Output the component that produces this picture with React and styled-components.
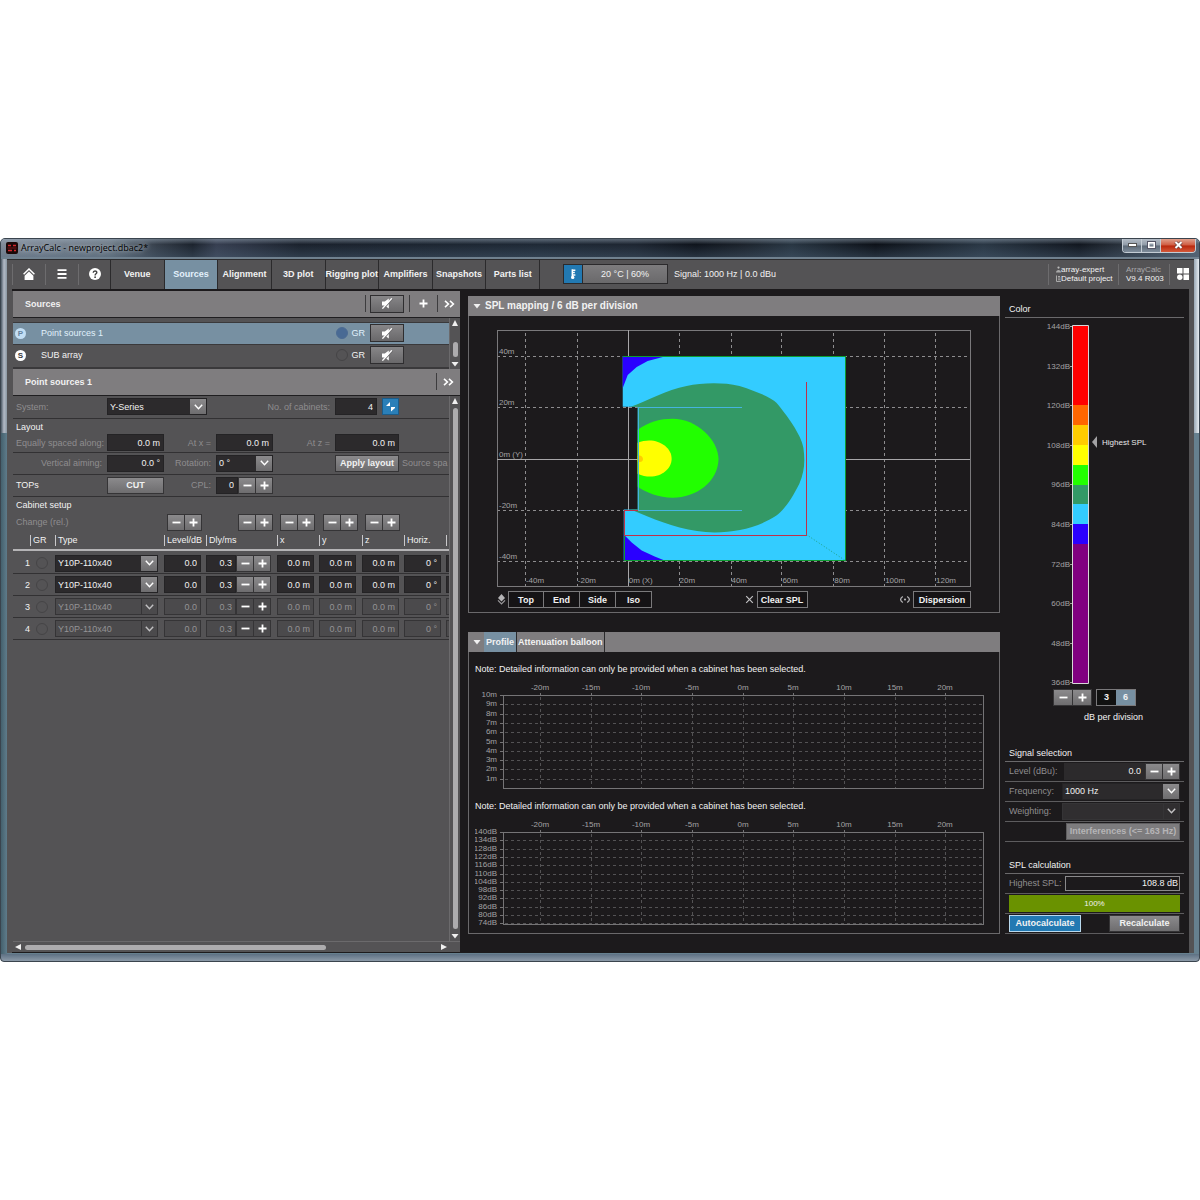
import { useState } from "react"
import styled, { createGlobalStyle, css } from "styled-components";

const GlobalStyle = createGlobalStyle`
    :root {
        --ui-font: "Liberation Sans", Arial, sans-serif;
        --title-font: "Open Sans", "Noto Sans", sans-serif;
        --panel: #545355;
        --header: #7f7d7f;
        --dark: #1c1a1c;
        --field: #2c2a2c;
        --line: #323133;
        --muted: #8f8d8f;
        --light: #f2f2f2;
        --accent: #7790a2;
        --blue: #2279b2;
    }
    * {
        box-sizing: border-box;
    }
    body {
        margin: 0;
        background: #fff;
        font-family: var(--ui-font);
        font-size: 9px;
        line-height: 12px;
        color: var(--light);
    }
    button, input, select {
        margin: 0;
        font: inherit;
        color: inherit;
    }
`
const Page = styled.div`
    display: flex;
    align-items: center;
    min-height: 100vh;
`
const Window = styled.div`
    flex: 1;
    min-width: 0;
    padding: 0 5px 8px 6px;
    border-radius: 5px 5px 4px 4px;
    border: 1px solid #3a444e;
    background:
        linear-gradient(#5d7083, #8c9aa8) bottom / 100% 7px no-repeat,
        linear-gradient(90deg, #4d5a66, #b3bac6 50%, #8b98a3) left top / 6px 194px no-repeat,
        linear-gradient(90deg, #8a9aa8, #e8edf2) right top / 6px 194px no-repeat,
        linear-gradient(90deg, #44606d, #5f7c8b) left / 6px 100% no-repeat,
        #66808f;
`
const TitleBar = styled.header`
    display: flex;
    align-items: flex-start;
    height: 20px;
    margin: 0 -5px 0 -6px;
    padding-left: 5px;
    border-radius: 4px 4px 0 0;
    border-bottom: 2px solid #70818f;
    background:
        linear-gradient(rgba(150, 165, 180, 0.5), rgba(20, 28, 38, 0.1) 30%, rgba(70, 90, 110, 0.45)),
        linear-gradient(90deg, #8e98a6, #76838f 9%, #3a434f 13%, #1d242e 16%, #3b4356 18%, #1b222d 25%, #202b38 45%, #1f2733 53%, #0e131b 58%, #1d242d 62%, #2b3946 66%, #0c1017 73%, #2d3b49 82%, #11161e 90%, #5c6b7a);
`
const Title = styled.h1`
    flex: 1;
    margin: 0;
    padding: 3px 0 0 3px;
    font-family: var(--title-font);
    font-size: 9px;
    font-weight: 400;
    line-height: 12px;
    letter-spacing: normal;
    color: #000;
    text-shadow: 0 0 4px #d5dbe2;
`
const AppLogo = styled.svg`
    margin-top: 3px;
`
const WindowButtons = styled.div`
    display: flex;
    margin-right: 3px;
    border: 1px solid #c3ccd4;
    border-top: none;
    border-radius: 0 0 4px 4px;
    overflow: hidden;
`
const WindowButton = styled.button`
    display: flex;
    align-items: center;
    justify-content: center;
    width: ${p => (p.$close ? 34 : 19)}px;
    height: 13px;
    padding: 0;
    border: none;
    border-right: ${p => (p.$close ? "none" : "1px solid #c3ccd4")};
    background: ${p => (p.$close
        ? "linear-gradient(#e0a08c, #cf5a40 48%, #b8270c 52%, #d4593a)"
        : "linear-gradient(#b3bcc6, #8e99a6 48%, #5b6876 52%, #7f8d9b)")};
`
const Frame = styled.div`
    padding: 0 5px 0;
    background: var(--panel);
    border-top: 1px solid #2c2c2e;
`
const Toolbar = styled.div`
    display: flex;
    align-items: stretch;
    height: 29px;
`
const IconButton = styled.button`
    display: flex;
    align-items: center;
    justify-content: center;
    width: 33px;
    margin: 4px 0;
    padding: 0;
    border: none;
    border-left: 1px solid #6d6c6e;
    background: none;
`
const Tabs = styled.nav`
    display: grid;
    grid-template-columns: repeat(8, 1fr);
    width: 430px;
    margin-left: -1px;
    border-left: 1px solid #2b2a2c;
`
const Tab = styled.button`
    padding: 0;
    border: none;
    border-right: 1px solid #2b2a2c;
    background: ${p => (p.$active ? "var(--accent)" : "none")};
    color: ${p => (p.$active ? "#e3f1fc" : "var(--light)")};
    font-weight: 700;
    white-space: nowrap;
`
const Climate = styled.button`
    display: flex;
    align-items: center;
    align-self: center;
    width: 105px;
    height: 20px;
    margin: 0 6px 0 23px;
    padding: 0;
    border: 1px solid #2b2a2c;
    background: linear-gradient(#7d7c7e, #6a696b);
    span {
        flex: 1;
    }
    svg {
        background: var(--blue);
        border-right: 1px solid #2b2a2c;
    }
`
const Signal = styled.span`
    flex: 1;
    align-self: center;
    white-space: nowrap;
`
const InfoBlock = styled.div`
    display: flex;
    flex-direction: column;
    justify-content: center;
    width: ${p => p.$width}px;
    margin: 4px 0;
    padding-left: 7px;
    border-left: 1px solid #6d6c6e;
    font-size: 8px;
    line-height: 9px;
    white-space: nowrap;
`
const InfoLine = styled.span`
    display: flex;
    align-items: center;
    color: ${p => (p.$dim ? "#a9a8aa" : "var(--light)")};
`
const AppsButton = styled(IconButton)`
    width: 20px;
    padding-left: 6px;
`
const Body = styled.main`
    display: grid;
    grid-template-columns: 448px minmax(0, 1fr) 185px;
    background: var(--dark);
`
const LeftPane = styled.section`
    display: flex;
    flex-direction: column;
    min-width: 0;
    margin: 2px 0 1px;
    padding-left: 1px;
    background: var(--panel);
`
const PaneHeader = styled.div`
    display: flex;
    align-items: center;
    height: 27px;
    padding-left: 12px;
    border-bottom: 1px solid #1f1e20;
    background: var(--header);
`
const PaneTitle = styled.h2`
    flex: 1;
    margin: 0;
    font-size: 9px;
    font-weight: 700;
`
const HeaderTools = styled.div`
    display: flex;
    align-items: center;
    height: 17px;
    padding-left: ${p => (p.$wide ? 4 : 0)}px;
    border-left: 1px solid #3d3c3e;
`
const HeaderButton = styled.button`
    display: flex;
    align-items: center;
    justify-content: center;
    width: ${p => p.$width}px;
    height: 17px;
    padding: 0;
    border: none;
    border-left: ${p => (p.$line ? "1px solid #3d3c3e" : "none")};
    background: none;
`
const MuteButton = styled.button`
    display: flex;
    align-items: center;
    justify-content: center;
    width: 34px;
    height: 18px;
    margin-right: ${p => p.$gap || 0}px;
    padding: 0;
    border: 1px solid #2f2e30;
    background: linear-gradient(#878688, #69686a);
`
const Scrollable = styled.div`
    display: grid;
    grid-template-columns: minmax(0, 1fr) 11px;
    flex: ${p => (p.$grow ? "1" : "none")};
`
const SourceList = styled.ul`
    margin: 0;
    padding: 4px 0 1px;
    list-style: none;
    border-bottom: 2px solid #3a393b;
`
const SourceItem = styled.li`
    display: flex;
    align-items: center;
    height: 22px;
    padding-left: 2px;
    border-top: 1px solid #3a393b;
    background: ${p => (p.$active ? "var(--accent)" : "none")};
    color: ${p => (p.$active ? "#e0f0fc" : "var(--light)")};
`
const SourceBadge = styled.span`
    width: 11px;
    height: 11px;
    margin-right: 15px;
    border-radius: 50%;
    background: ${p => (p.$active ? "#c3dff5" : "#fff")};
    color: ${p => (p.$active ? "#6583a0" : "#3a393b")};
    font-size: 8px;
    font-weight: 700;
    line-height: 11px;
    text-align: center;
`
const SourceName = styled.span`
    flex: 1;
`
const GroupLabel = styled.label`
    display: flex;
    align-items: center;
    gap: 4px;
    margin-right: 5px;
`
const Dot = styled.input`
    appearance: none;
    flex: none;
    width: 12px;
    height: 12px;
    border: 1px solid ${p => (p.$filled ? "#4d6c93" : "#454446")};
    border-radius: 50%;
    background: ${p => (p.$filled ? "#496a94" : "transparent")};
    vertical-align: middle;
`
const ScrollTrack = styled.div`
    display: flex;
    flex-direction: ${p => (p.$horizontal ? "row" : "column")};
    align-items: center;
    justify-content: space-between;
    gap: 3px;
    padding: ${p => (p.$horizontal ? "1px 12px 1px 1px" : "1px 0")};
    border-left: ${p => (p.$horizontal ? "none" : "1px solid #6b6a6c")};
    border-top: ${p => (p.$horizontal ? "1px solid #6b6a6c" : "none")};
`
const ScrollSlot = styled.div`
    display: flex;
    flex: 1;
    flex-direction: inherit;
    justify-content: ${p => (p.$end ? "flex-end" : "flex-start")};
`
const ScrollThumb = styled.div`
    width: ${p => (p.$horizontal ? "73%" : "5px")};
    height: ${p => (p.$horizontal ? "5px" : p.$length)};
    border-radius: 3px;
    background: #adacae;
`
const FormArea = styled.form`
    overflow: hidden;
`
const columns = css`
    display: grid;
    grid-template-columns: 91px 57px 52px 57px 62px 64px 1fr;
`
const FormRow = styled.div`
    ${columns}
    align-items: center;
    height: ${p => p.$height || 22}px;
    padding-left: 3px;
    border-bottom: 1px solid var(--line);
`
const FormHeading = styled.h3`
    height: 15px;
    margin: 0;
    padding: 2px 0 0 3px;
    font-size: 9px;
    font-weight: 400;
    line-height: 12px;
`
const Label = styled.label`
    padding-right: 5px;
    color: ${p => (p.$strong ? "var(--light)" : "var(--muted)")};
    text-align: ${p => (p.$left ? "left" : "right")};
    white-space: nowrap;
    grid-column: span ${p => p.$span || 1};
`
const SideNote = styled.span`
    padding-left: 3px;
    color: var(--muted);
    white-space: nowrap;
`
const fieldLook = css`
    width: 100%;
    min-width: 0;
    height: 17px;
    border: 1px solid #242325;
    border-radius: 0;
    background: var(--field);
    color: var(--light);
    &:disabled {
        border-color: #353436;
        background: #4b4a4c;
        color: #949395;
        opacity: 1;
    }
`
const Field = styled.input`
    ${fieldLook}
    padding: 0 3px;
    text-align: right;
`
const SelectBox = styled.div`
    display: grid;
    grid-template-columns: minmax(0, 1fr) 17px;
    align-items: center;
    grid-column: span ${p => p.$span || 1};
    width: ${p => p.$width || "auto"};
`
const Select = styled.select`
    ${fieldLook}
    appearance: none;
    grid-area: 1 / 1 / 2 / 3;
    padding: 0 18px 0 2px;
`
const Arrow = styled.span`
    display: flex;
    align-items: center;
    justify-content: center;
    grid-area: 1 / 2 / 2 / 3;
    z-index: 1;
    height: 15px;
    margin-right: 1px;
    border-left: ${p => (p.$disabled ? "1px solid #353436" : "none")};
    background: ${p => (p.$disabled ? "none" : "linear-gradient(#8b8a8c, #6e6d6f)")};
    pointer-events: none;
`
const Inline = styled.div`
    display: flex;
    width: ${p => p.$width || "auto"};
`
const Step = styled.button`
    display: flex;
    align-items: center;
    justify-content: center;
    flex: 0 0 ${p => (p.$wide ? 20 : 18)}px;
    height: 17px;
    padding: 0;
    border: 1px solid #353436;
    background: linear-gradient(#8b8a8c, #6e6d6f);
    & + & {
        margin-left: -1px;
    }
    &:disabled {
        background: #4b4a4c;
    }
`
const PushButton = styled.button`
    height: 17px;
    padding: 0 2px;
    border: 1px solid #353436;
    background: linear-gradient(#8b8a8c, #6e6d6f);
    font-weight: 700;
    white-space: nowrap;
    &:disabled {
        color: #b5b4b6;
        border-color: #5f5e60;
        background: #7d7c7e;
    }
`
const LinkButton = styled.button`
    display: flex;
    align-items: center;
    justify-content: center;
    flex: 0 0 17px;
    height: 17px;
    margin-left: 5px;
    padding: 0;
    border: 1px solid #1b5c89;
    background: #2a7fb8;
`
const CabinetTable = styled.table`
    width: 464px;
    border-collapse: collapse;
    table-layout: fixed;
    margin-left: -1px;
    th, td {
        padding: 0;
        font-weight: 400;
        text-align: left;
        white-space: nowrap;
    }
    tbody tr {
        border-bottom: 1px solid var(--line);
    }
    tbody td {
        height: 22px;
    }
    tbody tr:first-child td {
        height: 24px;
        padding-top: 2px;
    }
`
const ChangeRow = styled.tr`
    height: 21px;
    th {
        padding-left: 4px;
        color: var(--muted);
    }
`
const HeadRow = styled.tr`
    height: 17px;
    border-bottom: 2px solid #b5b4b6;
`
const HeadText = styled.span`
    display: block;
    height: 11px;
    padding-left: 2px;
    border-left: 1px solid #c9c8ca;
    line-height: 11px;
`
const StepPair = styled.div`
    display: flex;
    justify-content: flex-end;
    padding-right: 4px;
`
const RowNumber = styled.td`
    && {
        text-align: right;
    }
`
const DotCell = styled.td`
    && {
        padding-left: 6px;
    }
`
const Center = styled.section`
    display: flex;
    flex-direction: column;
    gap: 19px;
    min-width: 0;
    padding: 7px 4px 19px 8px;
`
const Panel = styled.article`
    border: 1px solid #6a696b;
    border-top: none;
`
const PanelBar = styled.div`
    display: flex;
    align-items: center;
    height: 20px;
    margin: 0 -1px;
    padding-left: 5px;
    background: var(--header);
`
const PanelTitle = styled.h2`
    margin: 0;
    padding-left: 4px;
    font-size: 10px;
    font-weight: 700;
`
const PanelTab = styled.button`
    height: 20px;
    margin-left: ${p => (p.$active ? 3 : 0)}px;
    padding: 0 ${p => (p.$active ? 2 : 1)}px;
    border: none;
    border-right: 1px solid #2b2a2c;
    background: ${p => (p.$active ? "var(--accent)" : "none")};
    font-weight: 700;
    white-space: nowrap;
`
const MapBody = styled.div`
    padding: 14px 28px 4px;
`
const Drawing = styled.svg`
    display: block;
    width: 100%;
    height: auto;
    font-family: var(--ui-font);
    font-size: 8px;
`
const MapTools = styled.div`
    display: flex;
    justify-content: space-between;
    margin-top: 4px;
`
const ToolGroup = styled.div`
    display: flex;
    align-items: center;
`
const OutlineButton = styled.button`
    width: ${p => p.$width}px;
    height: 17px;
    padding: 0;
    border: 1px solid #7a797b;
    background: #151315;
    font-weight: 700;
    & + & {
        border-left: none;
    }
`
const ToolIcon = styled.svg`
    margin-right: 2px;
`
const ProfileBody = styled.div`
    padding: 10px 12px 6px 6px;
`
const ProfileBlock = styled.section`
    & + & {
        margin-top: 9px;
    }
`
const Note = styled.p`
    height: 14px;
    margin: 0 0 4px;
    line-height: 14px;
`
const RightPane = styled.aside`
    padding: 14px 5px 0 1px;
`
const SideHeading = styled.h2`
    height: 15px;
    margin: 0;
    padding-left: 4px;
    border-bottom: 1px solid #6a696b;
    font-size: 9px;
    font-weight: 400;
    line-height: 13px;
`
const SideSection = styled.section`
    margin-top: ${p => p.$top || 0}px;
`
const SideRow = styled.div`
    display: grid;
    grid-template-columns: ${p => p.$cols || "53px 1fr"};
    align-items: center;
    height: 20px;
    padding: 0 4px;
    border-bottom: 1px solid #5d5c5e;
    select:disabled {
        background: #302e30;
    }
`
const DarkField = styled(Field)`
    height: ${p => (p.$framed ? 15 : 17)}px;
    padding-right: ${p => (p.$framed ? 1 : 3)}px;
    border-color: ${p => (p.$framed ? "#8a898b" : "#2c2a2c")};
    background: ${p => (p.$framed ? "var(--dark)" : "var(--field)")};
`
const ScaleTools = styled.div`
    display: flex;
    padding-left: 48px;
`
const DivisionSwitch = styled.div`
    display: flex;
    margin-left: 4px;
    border: 1px solid #7a797b;
`
const DivisionButton = styled.button`
    width: 19px;
    height: 15px;
    padding: 0;
    border: none;
    background: ${p => (p.$active ? "var(--accent)" : "#111")};
    font-weight: 700;
`
const ScaleCaption = styled.p`
    margin: 5px 0 0;
    padding-left: 79px;
`
const Progress = styled.div`
    height: 17px;
    background: #6a9200;
    line-height: 17px;
    text-align: center;
    font-size: 8px;
`
const Actions = styled.div`
    display: flex;
    align-items: center;
    justify-content: space-between;
    height: 20px;
    padding: 0 4px;
    border-bottom: 1px solid #5d5c5e;
`
const WideButton = styled(PushButton)`
    width: ${p => p.$width}px;
    padding: 0;
    ${p => p.$primary && css`
        border-color: #b9d9ee;
        background: #2279b2;
    `}
`

const tabNames = ["Venue", "Sources", "Alignment", "3D plot", "Rigging plot", "Amplifiers", "Snapshots", "Parts list"]
const headNames = ["GR", "Type", "Level/dB", "Dly/ms", "x", "y", "z", "Horiz.", ""]
const colWidths = [18, 25, 109, 42, 71, 42, 43, 42, 42, 30]
const cabinets = [1, 2, 3, 4]

function Minus() {
    return <svg width="9" height="9" viewBox="0 0 9 9"><path d="M0.5 4.5H8.5" stroke="#fff" strokeWidth="1.8" /></svg>
}
function Plus() {
    return <svg width="9" height="9" viewBox="0 0 9 9"><path d="M0.5 4.5H8.5M4.5 0.5V8.5" stroke="#fff" strokeWidth="1.8" /></svg>
}
function Chevron({ dim }) {
    return <svg width="9" height="6" viewBox="0 0 9 6"><path d="M0.8 0.8L4.5 4.8L8.2 0.8" fill="none" stroke={dim ? "#c2c1c3" : "#fff"} strokeWidth="1.4" /></svg>
}
function DoubleChevron() {
    return <svg width="11" height="8" viewBox="0 0 11 8"><path d="M1 0.8L4.4 4L1 7.2M6 0.8L9.4 4L6 7.2" fill="none" stroke="#fff" strokeWidth="1.6" /></svg>
}
function Mute() {
    return (
        <svg width="12" height="11" viewBox="0 0 12 11">
            <path d="M1 3.4H3.8L7.8 0.6V10.4L3.8 7.6H1Z" fill="#fff" />
            <path d="M2.6 10.8L11.6 1" stroke="#6f6e70" strokeWidth="1.1" />
            <path d="M1.4 10.6L10.8 0.4" stroke="#fff" strokeWidth="1.4" />
        </svg>
    )
}
function Triangle({ dir }) {
    const shapes = { up: "M4 1L7 7H1Z", down: "M0.5 2H7.5L4 6.5Z", left: "M7 1V7L1 4Z", right: "M1 1L7 4L1 7Z" }
    return <svg width="8" height="8" viewBox="0 0 8 8"><path d={shapes[dir]} fill="#f0f0f0" /></svg>
}

function Dropdown({ id, label, value, disabled, span, width }) {
    return (
        <SelectBox $span={span} $width={width}>
            <Select id={id} aria-label={label} disabled={disabled} defaultValue={value}>
                <option>{value}</option>
            </Select>
            <Arrow $disabled={disabled}><Chevron dim={disabled} /></Arrow>
        </SelectBox>
    )
}
function Steps({ disabled, name, wide }) {
    return (
        <>
            <Step type="button" $wide={wide} disabled={disabled} aria-label={`Decrease ${name}`}><Minus /></Step>
            <Step type="button" $wide={wide} disabled={disabled} aria-label={`Increase ${name}`}><Plus /></Step>
        </>
    )
}
function VerticalScroll({ length, end }) {
    return (
        <ScrollTrack>
            <Triangle dir="up" />
            <ScrollSlot $end={end}><ScrollThumb $length={length} /></ScrollSlot>
            <Triangle dir="down" />
        </ScrollTrack>
    )
}

function AppToolbar() {
    const [tab, setTab] = useState("Sources")
    return (
        <Toolbar>
            <IconButton aria-label="Home">
                <svg width="12" height="12" viewBox="0 0 12 12">
                    <path d="M0.6 6.2L6 1L11.4 6.2" fill="none" stroke="#fff" strokeWidth="1.5" />
                    <path d="M6 3.6L10.4 7.8V12H1.6V7.8Z" fill="#fff" />
                </svg>
            </IconButton>
            <IconButton aria-label="Menu">
                <svg width="10" height="10" viewBox="0 0 10 10"><path d="M0.5 1.2H9.5M0.5 5H9.5M0.5 8.8H9.5" stroke="#fff" strokeWidth="1.8" /></svg>
            </IconButton>
            <IconButton aria-label="Help">
                <svg width="12" height="12" viewBox="0 0 12 12">
                    <circle cx="6" cy="6" r="6" fill="#fff" />
                    <path d="M4.2 4.8C4.2 2.4 7.9 2.5 7.8 4.6C7.7 5.8 6.1 5.8 6.1 7.4" fill="none" stroke="#444" strokeWidth="1.4" />
                    <circle cx="6.1" cy="9.2" r="0.9" fill="#444" />
                </svg>
            </IconButton>
            <Tabs>
                {tabNames.map(name => (
                    <Tab key={name} $active={name === tab} onClick={() => setTab(name)}>{name}</Tab>
                ))}
            </Tabs>
            <Climate>
                <svg width="19" height="18" viewBox="0 0 19 18">
                    <path d="M8.8 4V13M9 5H12M9 7.5H11.4M9 10H12" stroke="#fff" strokeWidth="1.6" />
                    <circle cx="9.2" cy="12.6" r="1.8" fill="#fff" />
                </svg>
                <span>20 °C | 60%</span>
            </Climate>
            <Signal>Signal: 1000 Hz | 0.0 dBu</Signal>
            <InfoBlock $width={70}>
                <InfoLine>
                    <svg width="5" height="7" viewBox="0 0 5 7"><circle cx="2.5" cy="1.6" r="1.1" fill="#bbb" /><path d="M0 6.5C0 3 5 3 5 6.5Z" fill="#aaa" /></svg>
                    array-expert
                </InfoLine>
                <InfoLine>
                    <svg width="5" height="7" viewBox="0 0 5 7"><path d="M0.5 0.5V6.5H5M2 1.5H4M2 3H4.5M2 4.8H4.5" fill="none" stroke="#aaa" /></svg>
                    Default project
                </InfoLine>
            </InfoBlock>
            <InfoBlock $width={51}>
                <InfoLine $dim>ArrayCalc</InfoLine>
                <InfoLine>V9.4 R003</InfoLine>
            </InfoBlock>
            <AppsButton aria-label="Applications">
                <svg width="12" height="12" viewBox="0 0 12 12">
                    <path d="M0 0H5.5V5.5H0ZM6.5 0H12V5.5H6.5ZM6.5 6.5H12V12H6.5Z" fill="#fff" />
                    <circle cx="2.8" cy="9.2" r="2.7" fill="#fff" />
                </svg>
            </AppsButton>
        </Toolbar>
    )
}

function SourcesList() {
    const sources = [
        { letter: "P", name: "Point sources 1", active: true },
        { letter: "S", name: "SUB array", active: false },
    ]
    return (
        <Scrollable>
            <SourceList>
                {sources.map(s => (
                    <SourceItem key={s.name} $active={s.active}>
                        <SourceBadge $active={s.active}>{s.letter}</SourceBadge>
                        <SourceName>{s.name}</SourceName>
                        <GroupLabel><Dot type="checkbox" $filled={s.active} />GR</GroupLabel>
                        <MuteButton $gap={45} aria-label={`Mute ${s.name}`}><Mute /></MuteButton>
                    </SourceItem>
                ))}
            </SourceList>
            <VerticalScroll length="15px" end />
        </Scrollable>
    )
}

function CabinetRow({ number }) {
    const off = number > 2
    return (
        <tr>
            <RowNumber>{number}</RowNumber>
            <DotCell><Dot type="checkbox" aria-label={`Group ${number}`} /></DotCell>
            <td><Dropdown label={`Type ${number}`} value="Y10P-110x40" disabled={off} width="103px" /></td>
            <td><Inline $width="37px"><Field aria-label={`Level ${number}`} defaultValue="0.0" disabled={off} /></Inline></td>
            <td>
                <Inline $width="65px">
                    <Field aria-label={`Delay ${number}`} defaultValue="0.3" disabled={off} />
                    <Steps disabled={off} name={`delay ${number}`} />
                </Inline>
            </td>
            {["x", "y", "z"].map(axis => (
                <td key={axis}><Inline $width="37px"><Field aria-label={`${axis} ${number}`} defaultValue="0.0 m" disabled={off} /></Inline></td>
            ))}
            <td><Inline $width="37px"><Field aria-label={`Horizontal ${number}`} defaultValue="0 °" disabled={off} /></Inline></td>
            <td><Field aria-label={`Vertical ${number}`} disabled={off} /></td>
        </tr>
    )
}

function CabinetSetup() {
    return (
        <CabinetTable>
            <colgroup>{colWidths.map((w, i) => <col key={i} width={w} />)}</colgroup>
            <thead>
                <ChangeRow>
                    <th colSpan="3">Change (rel.)</th>
                    {["level", "delay", "x", "y", "z"].map(name => (
                        <td key={name}><StepPair><Steps name={name} /></StepPair></td>
                    ))}
                    <td colSpan="2" />
                </ChangeRow>
                <HeadRow>
                    <td />
                    {headNames.map(name => <th key={name}><HeadText>{name}</HeadText></th>)}
                </HeadRow>
            </thead>
            <tbody>
                {cabinets.map(n => <CabinetRow key={n} number={n} />)}
            </tbody>
        </CabinetTable>
    )
}

function SourceForm() {
    return (
        <Scrollable $grow>
            <FormArea>
                <FormRow $height={23}>
                    <Label htmlFor="system" $left>System:</Label>
                    <Dropdown id="system" value="Y-Series" span={2} width="100px" />
                    <Label htmlFor="cabinets" $span={2}>No. of cabinets:</Label>
                    <Inline>
                        <Field id="cabinets" defaultValue="4" />
                        <LinkButton type="button" aria-label="Link cabinets">
                            <svg width="11" height="11" viewBox="0 0 11 11"><path d="M1 5L5 1V5ZM6 6H10V7L6 10.5Z" fill="#fff" /></svg>
                        </LinkButton>
                    </Inline>
                </FormRow>
                <FormHeading>Layout</FormHeading>
                <FormRow $height={19}>
                    <Label htmlFor="spaced">Equally spaced along:</Label>
                    <Field id="spaced" defaultValue="0.0 m" />
                    <Label htmlFor="atx">At x =</Label>
                    <Field id="atx" defaultValue="0.0 m" />
                    <Label htmlFor="atz">At z =</Label>
                    <Field id="atz" defaultValue="0.0 m" />
                </FormRow>
                <FormRow>
                    <Label htmlFor="aiming">Vertical aiming:</Label>
                    <Field id="aiming" defaultValue="0.0 °" />
                    <Label htmlFor="rotation">Rotation:</Label>
                    <Dropdown id="rotation" value="0 °" />
                    <span />
                    <PushButton type="button">Apply layout</PushButton>
                    <SideNote>Source spa</SideNote>
                </FormRow>
                <FormRow>
                    <Label as="span" $left $strong>TOPs</Label>
                    <PushButton type="button">CUT</PushButton>
                    <Label htmlFor="cpl">CPL:</Label>
                    <Inline>
                        <Field id="cpl" defaultValue="0" />
                        <Steps name="CPL" />
                    </Inline>
                </FormRow>
                <FormHeading>Cabinet setup</FormHeading>
                <CabinetSetup />
            </FormArea>
            <VerticalScroll length="100%" />
        </Scrollable>
    )
}

function SplMap() {
    const xs = [[28, "-40m"], [80, "-20m"], [131, "0m (X)"], [182, "20m"], [234, "40m"], [285, "60m"], [337, "80m"], [388, "100m"], [439, "120m"]]
    const ys = [[26, "40m"], [77, "20m"], [129, "0m (Y)"], [180, "-20m"], [231, "-40m"]]
    return (
        <Drawing viewBox="0 0 475 258" fill="#a3a2a4">
            <g stroke="#8f8e90" strokeDasharray="3 3" shapeRendering="crispEdges">
                {xs.map(([x]) => <path key={x} d={`M${x + 0.5} 3V257`} />)}
                {ys.map(([y]) => <path key={y} d={`M0 ${y + 0.5}H474`} />)}
            </g>
            <g fill="none" stroke="#a8a7a9" shapeRendering="crispEdges">
                <path d="M0.5 0.5H474.5V257.5H0.5Z" stroke="#7a797b" />
                <path d="M131.5 0V257M0 129.5H474" />
            </g>
            {xs.map(([x, text]) => <text key={x} x={x + 1} y="254">{text}</text>)}
            {ys.map(([y, text]) => <text key={y} x="2" y={y - 2}>{text}</text>)}
            <path d="M126 26H349V231H127V180H141V77H126Z" fill="#33ccff" />
            <path d="M126 26H170L151 31L140 37L131 45L126 58ZM127 205L135 213L145 221L158 227L168 231H127Z" fill="#2a00ff" />
            <path d="M134 77C150 71 170 60 190 56C205 53 225 52 243 56C262 62 275 68 280 73C290 85 305 105 307 118C309 132 308 142 303 154C296 168 288 180 280 186C260 199 240 202 218 203C195 203 170 195 151 187L134 180H141V77Z" fill="#339966" />
            <path d="M141 100C152 92 164 89 176 89C200 89 222 110 222 130C221 152 200 168 176 168C162 168 150 163 141 157Z" fill="#22ff00" />
            <path d="M141 113C158 106 175 116 175 129C175 142 158 152 141 144Z" fill="#ffff00" />
            <path d="M141 126C147 124 149 134 141 132Z" fill="#ffcc00" />
            <g fill="none" shapeRendering="crispEdges">
                <path d="M246 77.5H141.5V180.5H246" stroke="#45b4e0" />
                <path d="M126 26.5H349.5V230.5H127.5V205" stroke="#0c9c30" />
                <path d="M141 180.5H127.5V205.5H310.5V52" stroke="#c0304a" />
            </g>
            <path d="M310 205L349 231" stroke="#1f9f7f" strokeDasharray="1 2" />
        </Drawing>
    )
}

function ProfileChart({ labels, step, bottom }) {
    const xs = [65, 116, 166, 217, 268, 318, 369, 420, 470]
    return (
        <Drawing viewBox="0 0 512 110" fill="#a3a2a4">
            <g stroke="#535254" strokeDasharray="3 3" shapeRendering="crispEdges">
                {xs.map(x => <path key={x} d={`M${x + 0.5} 17V${bottom}`} />)}
                {labels.map((l, i) => i > 0 && <path key={l} d={`M30 ${Math.round(15 + i * step) + 0.5}H508`} />)}
            </g>
            <g fill="none" stroke="#757476" shapeRendering="crispEdges">
                <path d={`M28.5 15.5H508.5V${bottom + 0.5}H28.5Z`} />
                {xs.map(x => <path key={x} d={`M${x + 0.5} 13V16`} />)}
                {labels.map((l, i) => <path key={l} d={`M25 ${Math.round(15 + i * step) + 0.5}H28`} />)}
            </g>
            {xs.map((x, i) => <text key={x} x={x} y="10" textAnchor="middle">{`${i * 5 - 20}m`}</text>)}
            {labels.map((l, i) => <text key={l} x="22" y={Math.round(17 + i * step)} textAnchor="end">{l}</text>)}
        </Drawing>
    )
}

function ColorScale() {
    const bands = [["#ff0000", 8, 79], ["#ff6600", 87, 20], ["#ffcc00", 107, 20], ["#ffff00", 127, 20], ["#22ff00", 147, 20], ["#339966", 167, 19], ["#33ccff", 186, 20], ["#2a00ff", 206, 20], ["#800080", 226, 139]]
    const marks = [144, 132, 120, 108, 96, 84, 72, 60, 48, 36]
    return (
        <Drawing viewBox="0 0 179 371" fill="#a3a2a4">
            {bands.map(([color, y, h]) => <rect key={color} x="67" y={y} width="16" height={h} fill={color} />)}
            <path d="M67.5 7.5H83.5V365.5H67.5Z" fill="none" stroke="#d8d7d9" />
            {marks.map((m, i) => {
                const y = Math.round(8 + (144 - m) * 3.3)
                return (
                    <g key={m}>
                        <path d={`M65 ${y + 0.5}H67`} stroke="#a3a2a4" />
                        <text x="65" y={y + 3} textAnchor="end">{m}dB</text>
                    </g>
                )
            })}
            <path d="M87 124L92 118V130Z" fill="#a3a2a4" />
            <text x="97" y="127" fill="#e8e8e8">Highest SPL</text>
        </Drawing>
    )
}

function Controls() {
    const [division, setDivision] = useState(6)
    return (
        <RightPane>
            <SideHeading>Color</SideHeading>
            <ColorScale />
            <ScaleTools>
                <Steps wide name="scale" />
                <DivisionSwitch>
                    {[3, 6].map(n => (
                        <DivisionButton key={n} $active={n === division} onClick={() => setDivision(n)}>{n}</DivisionButton>
                    ))}
                </DivisionSwitch>
            </ScaleTools>
            <ScaleCaption>dB per division</ScaleCaption>
            <SideSection $top={24}>
                <SideHeading>Signal selection</SideHeading>
                <SideRow $cols="55px 1fr auto">
                    <Label htmlFor="level" $left>Level (dBu):</Label>
                    <DarkField id="level" defaultValue="0.0" />
                    <Inline><Steps name="level" /></Inline>
                </SideRow>
                <SideRow>
                    <Label htmlFor="frequency" $left>Frequency:</Label>
                    <Dropdown id="frequency" value="1000 Hz" />
                </SideRow>
                <SideRow>
                    <Label htmlFor="weighting" $left>Weighting:</Label>
                    <Dropdown id="weighting" value="" disabled />
                </SideRow>
                <SideRow $cols="57px 1fr">
                    <span />
                    <WideButton disabled>Interferences (&lt;= 163 Hz)</WideButton>
                </SideRow>
            </SideSection>
            <SideSection $top={17}>
                <SideHeading>SPL calculation</SideHeading>
                <SideRow $cols="56px 1fr">
                    <Label htmlFor="highest" $left>Highest SPL:</Label>
                    <DarkField id="highest" $framed defaultValue="108.8 dB" />
                </SideRow>
                <SideRow $cols="1fr">
                    <Progress>100%</Progress>
                </SideRow>
                <Actions>
                    <WideButton $width={72} $primary>Autocalculate</WideButton>
                    <WideButton $width={71}>Recalculate</WideButton>
                </Actions>
            </SideSection>
        </RightPane>
    )
}

const heights = ["10m", "9m", "8m", "7m", "6m", "5m", "4m", "3m", "2m", "1m"]
const levels = ["140dB", "134dB", "128dB", "122dB", "116dB", "110dB", "104dB", "98dB", "92dB", "86dB", "80dB", "74dB"]
const profileNote = "Note: Detailed information can only be provided when a cabinet has been selected."

function App() {
    return (
        <Page>
            <GlobalStyle />
            <Window>
                <TitleBar>
                    <AppLogo width="12" height="12" viewBox="0 0 12 12">
                        <rect width="12" height="12" rx="2" fill="#1a0808" />
                        <path d="M2 3.5H5M7 3.5H10M2 8.5H6M8 8.5H10" stroke="#d3262c" strokeWidth="1.6" />
                        <path d="M1.5 6H10.5" stroke="#7a1518" />
                    </AppLogo>
                    <Title>ArrayCalc - newproject.dbac2*</Title>
                    <WindowButtons>
                        <WindowButton aria-label="Minimize">
                            <svg width="9" height="4" viewBox="0 0 9 4"><rect x="0.5" y="0.5" width="8" height="3" fill="#fff" stroke="#555" /></svg>
                        </WindowButton>
                        <WindowButton aria-label="Maximize">
                            <svg width="9" height="8" viewBox="0 0 9 8"><rect x="1.5" y="1.5" width="6" height="5" fill="none" stroke="#fff" strokeWidth="2" /><rect x="0.5" y="0.5" width="8" height="7" fill="none" stroke="#556" /></svg>
                        </WindowButton>
                        <WindowButton $close aria-label="Close">
                            <svg width="9" height="8" viewBox="0 0 9 8"><path d="M1.5 1L7.5 7M7.5 1L1.5 7" stroke="#5b3a3a" strokeWidth="3.2" /><path d="M1.5 1L7.5 7M7.5 1L1.5 7" stroke="#fff" strokeWidth="2" /></svg>
                        </WindowButton>
                    </WindowButtons>
                </TitleBar>
                <Frame>
                    <AppToolbar />
                    <Body>
                        <LeftPane>
                            <PaneHeader>
                                <PaneTitle>Sources</PaneTitle>
                                <HeaderTools $wide>
                                    <MuteButton $gap={5} aria-label="Mute all"><Mute /></MuteButton>
                                    <HeaderButton $width={28} $line aria-label="Add source"><Plus /></HeaderButton>
                                    <HeaderButton $width={23} $line aria-label="Collapse sources"><DoubleChevron /></HeaderButton>
                                </HeaderTools>
                            </PaneHeader>
                            <SourcesList />
                            <PaneHeader>
                                <PaneTitle>Point sources 1</PaneTitle>
                                <HeaderTools>
                                    <HeaderButton $width={23} aria-label="Collapse settings"><DoubleChevron /></HeaderButton>
                                </HeaderTools>
                            </PaneHeader>
                            <SourceForm />
                            <ScrollTrack $horizontal>
                                <Triangle dir="left" />
                                <ScrollSlot><ScrollThumb $horizontal /></ScrollSlot>
                                <Triangle dir="right" />
                            </ScrollTrack>
                        </LeftPane>
                        <Center>
                            <Panel>
                                <PanelBar>
                                    <Triangle dir="down" />
                                    <PanelTitle>SPL mapping / 6 dB per division</PanelTitle>
                                </PanelBar>
                                <MapBody>
                                    <SplMap />
                                    <MapTools>
                                        <ToolGroup>
                                            <ToolIcon width="9" height="11" viewBox="0 0 9 11"><path d="M4.5 0L8 4L4.5 7.5L1 4Z" fill="#b5b4b6" /><path d="M1 6.4L4.5 10L8 6.4" fill="none" stroke="#9a999b" strokeWidth="1.2" /></ToolIcon>
                                            {["Top", "End", "Side", "Iso"].map(name => <OutlineButton key={name} $width={36}>{name}</OutlineButton>)}
                                        </ToolGroup>
                                        <ToolGroup>
                                            <ToolIcon width="11" height="9" viewBox="0 0 11 9"><path d="M2.2 1.2L8.8 7.8M8.8 1.2L2.2 7.8" stroke="#c2c1c3" strokeWidth="1.2" /></ToolIcon>
                                            <OutlineButton $width={51}>Clear SPL</OutlineButton>
                                        </ToolGroup>
                                        <ToolGroup>
                                            <ToolIcon width="12" height="9" viewBox="0 0 12 9"><path d="M3.8 1.5Q-0.6 4.5 3.8 7.5M8.2 1.5Q12.6 4.5 8.2 7.5" fill="none" stroke="#b5b4b6" strokeWidth="1.3" /><circle cx="6" cy="4.5" r="1.1" fill="#b5b4b6" /></ToolIcon>
                                            <OutlineButton $width={58}>Dispersion</OutlineButton>
                                        </ToolGroup>
                                    </MapTools>
                                </MapBody>
                            </Panel>
                            <Panel>
                                <PanelBar>
                                    <Triangle dir="down" />
                                    <PanelTab $active>Profile</PanelTab>
                                    <PanelTab>Attenuation balloon</PanelTab>
                                </PanelBar>
                                <ProfileBody>
                                    <ProfileBlock>
                                        <Note>{profileNote}</Note>
                                        <ProfileChart labels={heights} step={9.3} bottom={108} />
                                    </ProfileBlock>
                                    <ProfileBlock>
                                        <Note>{profileNote}</Note>
                                        <ProfileChart labels={levels} step={8.3} bottom={107} />
                                    </ProfileBlock>
                                </ProfileBody>
                            </Panel>
                        </Center>
                        <Controls />
                    </Body>
                </Frame>
            </Window>
        </Page>
    )
}

export default App
